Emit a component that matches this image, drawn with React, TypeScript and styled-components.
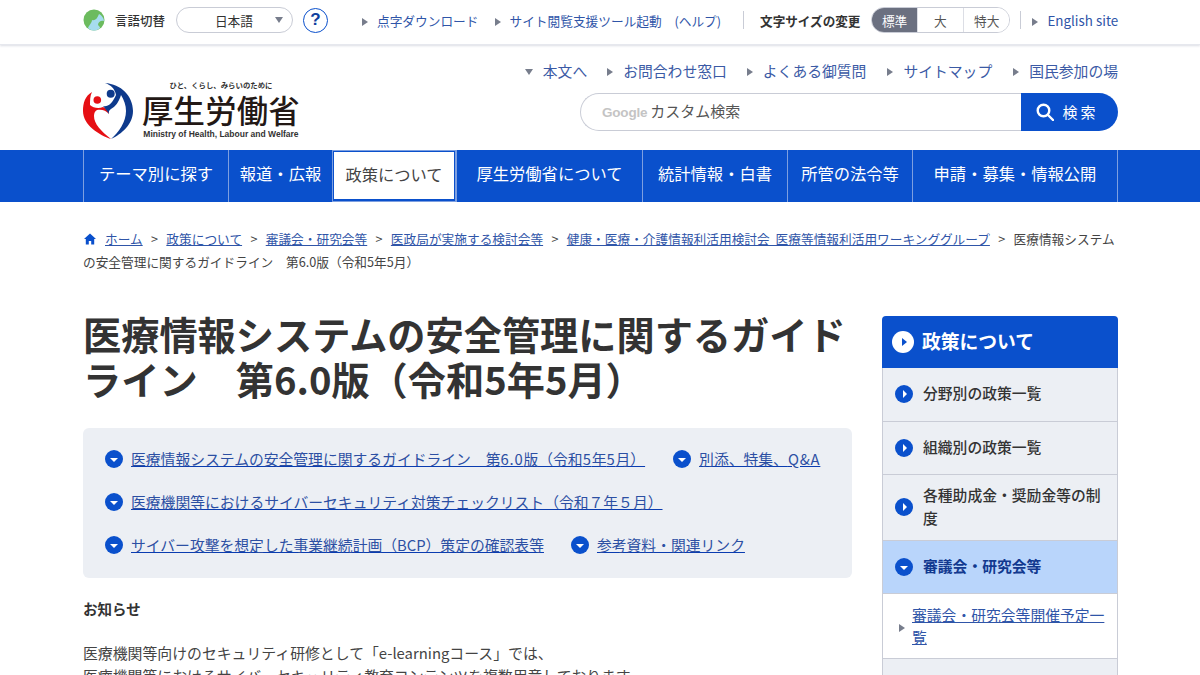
import React from "react";
import styled, { createGlobalStyle } from "styled-components";

const Global = createGlobalStyle`
  html, body { margin: 0; padding: 0; height: 675px; overflow: hidden; background: #fff; }
  body { font-family: "Noto Sans CJK JP", "Noto Sans", sans-serif; color: #333; }
  a { color: inherit; }
  * { box-sizing: border-box; }
`;

const Container = styled.div`
  width: 1035px;
  margin-left: 83px;
`;

const TopBar = styled.div`
  height: 45px;
  border-bottom: 1px solid #e6e8ee;
  box-shadow: 0 1px 2px rgba(60, 70, 110, 0.18);
`;

const TopRow = styled(Container)`
  display: flex;
  align-items: center;
  height: 40px;
  font-size: 12.7px;
  & > * {
    flex: none;
  }
`;

const LangLabel = styled.span`
  font-size: 12.5px;
  font-weight: 500;
  color: #333;
  margin-left: 10px;
  width: 61px;
  white-space: nowrap;
`;

const LangSelect = styled.div`
  width: 117px;
  height: 26px;
  border: 1px solid #c9ccd6;
  border-radius: 13px;
  display: flex;
  align-items: center;
  justify-content: flex-end;
  padding-right: 9px;
  gap: 22px;
  font-size: 12.7px;
`;

const Tri = styled.span<{ $dir?: "r" | "d"; $color?: string; $mt?: number }>`
  display: inline-block;
  width: 0;
  height: 0;
  flex: none;
  margin-top: ${(p) => p.$mt ?? 4}px;
  ${(p) =>
    p.$dir === "d"
      ? `border-left: 4.5px solid transparent; border-right: 4.5px solid transparent; border-top: 6px solid ${p.$color || "#777d8c"};`
      : `border-top: 4.5px solid transparent; border-bottom: 4.5px solid transparent; border-left: 6px solid ${p.$color || "#777d8c"};`}
`;

const Help = styled.div`
  width: 25px;
  height: 25px;
  margin-left: 10px;
  border: 1.5px solid #0a50cc;
  border-radius: 50%;
  color: #0f3f9e;
  display: flex;
  align-items: center;
  justify-content: center;
  font: 700 17px "Liberation Sans", sans-serif;
`;

const UtilLink = styled.a<{ $ml: number; $fs?: number }>`
  display: inline-flex;
  align-items: center;
  gap: 9px;
  margin-left: ${(p) => p.$ml}px;
  font-size: ${(p) => p.$fs ?? 12.7}px;
  color: #2f55a8;
  white-space: nowrap;
`;

const VLine = styled.span<{ $ml: number }>`
  width: 1px;
  height: 18px;
  background: #c9ccd6;
  margin-left: ${(p) => p.$ml}px;
`;

const SizeLabel = styled.span`
  margin-left: 16px;
  font-size: 12.6px;
  font-weight: 700;
  color: #333;
  white-space: nowrap;
`;

const SizeGroup = styled.div`
  display: flex;
  width: 139px;
  height: 26px;
  margin-left: 11px;
  border: 1px solid #c9ccd6;
  border-radius: 13px;
  overflow: hidden;
`;

const SizeBtn = styled.div<{ $on?: boolean; $w: number }>`
  width: ${(p) => p.$w}px;
  display: flex;
  align-items: center;
  justify-content: center;
  font-size: 12.7px;
  color: ${(p) => (p.$on ? "#fff" : "#555")};
  background: ${(p) => (p.$on ? "#6b7080" : "#fff")};
  border-left: ${(p) => (p.$on ? "none" : "1px solid #dcdee5")};
`;

const Header = styled(Container)`
  height: 105px;
  display: flex;
  justify-content: space-between;
`;

const Logo = styled.div`
  display: flex;
  margin-top: 38px;
  align-items: flex-start;
`;

const LogoText = styled.div`
  display: flex;
  flex-direction: column;
  align-items: center;
  margin-left: 9px;
  color: #231815;
`;

const LogoTag = styled.div`
  font-size: 7.4px;
  font-weight: 700;
  line-height: 10px;
  color: #333;
  margin-top: -3px;
`;

const LogoName = styled.div`
  font-size: 31.4px;
  font-weight: 500;
  line-height: 34px;
  letter-spacing: 0.2px;
  margin-top: 3px;
`;

const LogoEn = styled.div`
  font: 700 8.5px/11px "Liberation Sans", sans-serif;
  color: #333;
  margin-top: 2px;
`;

const HeadRight = styled.div`
  display: flex;
  flex-direction: column;
  align-items: flex-end;
`;

const HeadLinks = styled.div`
  display: flex;
  align-items: center;
  height: 22px;
  margin-top: 14px;
`;

const HeadLink = styled.a<{ $ml?: number }>`
  display: inline-flex;
  align-items: center;
  gap: 10px;
  margin-left: ${(p) => p.$ml ?? 0}px;
  font-size: 14.8px;
  color: #3b5aa5;
  white-space: nowrap;
`;

const Search = styled.div`
  display: flex;
  width: 538px;
  height: 38px;
  margin-top: 12px;
`;

const SearchField = styled.div`
  flex: 1;
  border: 1px solid #c9ccd6;
  border-right: none;
  border-radius: 19px 0 0 19px;
  display: flex;
  align-items: center;
  padding: 0 0 4px 21px;
  font-size: 15px;
  color: #555;
`;

const GoogleMark = styled.span`
  font: 700 13.5px "Liberation Sans", sans-serif;
  color: #c4c4c4;
  margin: 4px 3px 0 0;
  letter-spacing: -0.2px;
`;

const SearchBtn = styled.div`
  width: 97px;
  background: #0a50cc;
  border-radius: 0 19px 19px 0;
  color: #fff;
  display: flex;
  align-items: center;
  justify-content: center;
  gap: 8px;
  font-size: 15px;
  letter-spacing: 3px;
  padding: 0 4px 2px 0;
`;

const NavBar = styled.nav`
  background: #0a50cc;
  height: 52px;
`;

const NavRow = styled(Container)`
  display: flex;
  height: 52px;
  border-right: 1px solid #7d9fe0;
`;

const NavItem = styled.a<{ $w: number; $on?: boolean }>`
  width: ${(p) => p.$w}px;
  border-left: 1px solid #7d9fe0;
  display: flex;
  align-items: center;
  justify-content: center;
  padding-bottom: 6px;
  font-size: 16.3px;
  white-space: nowrap;
  color: ${(p) => (p.$on ? "#444" : "#fff")};
  background: ${(p) => (p.$on ? "#fff" : "transparent")};
  ${(p) => (p.$on ? "border: 2px solid #0a50cc; border-left-color: #0a50cc; border-bottom-width: 3px; padding-bottom: 4px; outline: 1px solid #7d9fe0; outline-offset: -1px;" : "")}
`;

const Crumbs = styled.div`
  margin-top: 26px;
  font-size: 12.7px;
  line-height: 22.5px;
  word-spacing: 3px;
  color: #444;
`;

const Crumb = styled.a`
  color: #2f55a8;
  text-decoration: underline;
`;

const Sep = styled.span`
  margin: 0 8.3px;
  color: #444;
`;

const Columns = styled(Container)`
  display: flex;
  justify-content: space-between;
  margin-top: 43px;
`;

const Main = styled.main`
  width: 769px;
`;

const Title = styled.h1`
  margin: -5px 0 0;
  font-size: 38.2px;
  line-height: 45px;
  font-weight: 700;
  color: #333;
`;

const Toc = styled.div`
  margin-top: 27px;
  height: 150px;
  border-radius: 6px;
  background: #eceff4;
  padding: 9px 22px;
`;

const TocRow = styled.div<{ $gap?: number }>`
  display: flex;
  align-items: center;
  height: 43px;
  gap: ${(p) => p.$gap ?? 27}px;
`;

const TocItem = styled.a`
  display: flex;
  align-items: center;
  gap: 8px;
  font-size: 14.8px;
  white-space: nowrap;
  color: #2c4fa3;
  span {
    text-decoration: underline;
    text-decoration-color: #0a3cb0;
  }
`;

const Wide = styled.b`
  font-weight: 400;
  letter-spacing: 0.8px;
`;

const Dot = styled.span<{ $size: number; $down?: boolean; $bg?: string; $fg?: string; $mt?: number }>`
  width: ${(p) => p.$size}px;
  height: ${(p) => p.$size}px;
  border-radius: 50%;
  flex: none;
  margin-top: ${(p) => p.$mt ?? 0}px;
  display: flex;
  align-items: center;
  justify-content: center;
  background: ${(p) => p.$bg || "#0a50cc"};
  &::after {
    content: "";
    display: block;
    ${(p) => {
      const s = p.$size / 4.5;
      const c = p.$fg || "#fff";
      return p.$down
        ? `border-left: ${s}px solid transparent; border-right: ${s}px solid transparent; border-top: ${s * 1.2}px solid ${c}; margin-top: 2px;`
        : `border-top: ${s}px solid transparent; border-bottom: ${s}px solid transparent; border-left: ${s * 1.2}px solid ${c}; margin-left: 2px;`;
    }}
  }
`;

const Notice = styled.h2`
  margin: 20px 0 0;
  font-size: 14.5px;
  line-height: 22px;
  font-weight: 700;
  color: #333;
`;

const Body = styled.p`
  margin: 22px 0 0;
  font-size: 14.87px;
  line-height: 22.5px;
  color: #444;
  white-space: nowrap;
`;

const Side = styled.aside`
  width: 236px;
  border-left: 1px solid #c9ccd6;
  border-right: 1px solid #c9ccd6;
  border-radius: 6px 6px 0 0;
`;

const SideHead = styled.div`
  height: 52px;
  margin: 0 -1px;
  background: #0a50cc;
  border-radius: 4px 4px 0 0;
  color: #fff;
  display: flex;
  align-items: center;
  gap: 8px;
  padding: 0 0 4px 10px;
  font-size: 18.8px;
  font-weight: 700;
`;

const SideItem = styled.div<{ $h: number; $on?: boolean }>`
  height: ${(p) => p.$h}px;
  background: ${(p) => (p.$on ? "#b9d5fb" : "#eceff4")};
  border-bottom: 1px solid #c9ccd6;
  display: flex;
  align-items: center;
  gap: 10px;
  padding: 0 12px 4px;
  font-size: 14.8px;
  line-height: 23px;
  font-weight: ${(p) => (p.$on ? 700 : 500)};
  color: ${(p) => (p.$on ? "#12398f" : "#333")};
`;

const SideSub = styled.div`
  height: 65px;
  background: #fff;
  border-bottom: 1px solid #c9ccd6;
  display: flex;
  align-items: center;
  gap: 7px;
  padding: 0 10px 0 16px;
  font-size: 14.8px;
  line-height: 22px;
  a {
    color: #2f55a8;
    text-decoration: underline;
  }
`;

const SideTail = styled.div`
  height: 40px;
  background: #eceff4;
`;

const Emblem = () => (
  <svg width="50" height="56" viewBox="4 5 50 56" style={{ flex: "none" }}>
    <circle cx="18.3" cy="22" r="3.8" fill="#e60f14" />
    <circle cx="31.7" cy="15.7" r="4" fill="#0e3a8c" />
    <path d="M13 14C6 18 4 25 4 33C4 47 20 57 32 61C22 53 15 46 15 38C15 35 16 33 18 32C22 31 27 32 30 36C29 32 27 30 24 29C20 31 14 30 11 27C11 22 11 18 13 14Z" fill="#e60f14" />
    <path d="M26 5C42 6 54 18 54 33C54 46 43 56 32 61C40 54 47 44 47 33C47 27 45 22 42 17C40 24 36 29 32 31C30 32 29.5 34 30 36C28 33 26 30 24 28C29 29 33 26 37 17C36 11 32 7 26 5Z" fill="#0e3a8c" />
  </svg>
);

const Globe = () => (
  <svg width="22" height="22" viewBox="0 0 22 22" style={{ flex: "none" }}>
    <circle cx="11" cy="11" r="10.5" fill="#6cbb5e" />
    <path d="M5 19c1-3 4-5 4-8 3 1 5-1 7-6 2 1 5 4 5 7-3-1-6 1-6 4 1 1 2 2 2 3-2 2-4 2.500-6 2.500s-4-.5-6-2.500Z" fill="#a6dcef" />
  </svg>
);

const Magnifier = () => (
  <svg width="18" height="18" viewBox="0 0 18 18" fill="none" stroke="#fff" strokeWidth="2.4" style={{ flex: "none", marginTop: 2 }}>
    <circle cx="7.500" cy="7.500" r="5.800" />
    <path d="M12 12l5 5" strokeLinecap="round" />
  </svg>
);

const HomeIcon = () => (
  <svg width="12" height="12" viewBox="0 0 12 12" fill="#0a50cc" style={{ margin: "0 9px 0 1px", verticalAlign: "-1px" }}>
    <path d="M6 0.500 0 6h1.800v5.500h3V8h2.400v3.500h3V6H12Z" />
  </svg>
);

export default function App() {
  return (
    <>
      <Global />
      <TopBar>
        <TopRow>
          <Globe />
          <LangLabel>言語切替</LangLabel>
          <LangSelect>日本語<Tri $dir="d" $mt={0} /></LangSelect>
          <Help>?</Help>
          <UtilLink $ml={34}><Tri />点字ダウンロード</UtilLink>
          <UtilLink $ml={16}><Tri />サイト閲覧支援ツール起動　(ヘルプ)</UtilLink>
          <VLine $ml={22} />
          <SizeLabel>文字サイズの変更</SizeLabel>
          <SizeGroup>
            <SizeBtn $on $w={45}>標準</SizeBtn>
            <SizeBtn $w={47}>大</SizeBtn>
            <SizeBtn $w={47}>特大</SizeBtn>
          </SizeGroup>
          <VLine $ml={10} />
          <UtilLink $ml={11} $fs={13.4}><Tri />English site</UtilLink>
        </TopRow>
      </TopBar>
      <Header>
        <Logo>
          <Emblem />
          <LogoText>
            <LogoTag>ひと、くらし、みらいのために</LogoTag>
            <LogoName>厚生労働省</LogoName>
            <LogoEn>Ministry of Health, Labour and Welfare</LogoEn>
          </LogoText>
        </Logo>
        <HeadRight>
          <HeadLinks>
            <HeadLink><Tri $dir="d" />本文へ</HeadLink>
            <HeadLink $ml={20}><Tri />お問合わせ窓口</HeadLink>
            <HeadLink $ml={20}><Tri />よくある御質問</HeadLink>
            <HeadLink $ml={21}><Tri />サイトマップ</HeadLink>
            <HeadLink $ml={21}><Tri />国民参加の場</HeadLink>
          </HeadLinks>
          <Search>
            <SearchField><GoogleMark>Google</GoogleMark>カスタム検索</SearchField>
            <SearchBtn><Magnifier />検索</SearchBtn>
          </Search>
        </HeadRight>
      </Header>
      <NavBar>
        <NavRow>
          <NavItem $w={145}>テーマ別に探す</NavItem>
          <NavItem $w={104}>報道・広報</NavItem>
          <NavItem $w={124} $on>政策について</NavItem>
          <NavItem $w={186}>厚生労働省について</NavItem>
          <NavItem $w={145}>統計情報・白書</NavItem>
          <NavItem $w={125}>所管の法令等</NavItem>
          <NavItem $w={205}>申請・募集・情報公開</NavItem>
        </NavRow>
      </NavBar>
      <Container>
        <Crumbs>
          <HomeIcon /><Crumb>ホーム</Crumb><Sep>&gt;</Sep>
          <Crumb>政策について</Crumb><Sep>&gt;</Sep>
          <Crumb>審議会・研究会等</Crumb><Sep>&gt;</Sep>
          <Crumb>医政局が実施する検討会等</Crumb><Sep>&gt;</Sep>
          <Crumb>健康・医療・介護情報利活用検討会 医療等情報利活用ワーキンググループ</Crumb><Sep>&gt;</Sep>
          医療情報システムの安全管理に関するガイドライン　第6.0版（令和5年5月）
        </Crumbs>
      </Container>
      <Columns>
        <Main>
          <Title>医療情報システムの安全管理に関するガイドライン　第6.0版（令和5年5月）</Title>
          <Toc>
            <TocRow $gap={28}>
              <TocItem><Dot $size={18} $down /><span>医療情報システムの安全管理に関するガイドライン　第<Wide>6.0</Wide>版（令和<Wide>5</Wide>年<Wide>5</Wide>月）</span></TocItem>
              <TocItem><Dot $size={18} $down /><span>別添、特集、<Wide>Q&amp;A</Wide></span></TocItem>
            </TocRow>
            <TocRow>
              <TocItem><Dot $size={18} $down /><span>医療機関等におけるサイバーセキュリティ対策チェックリスト（令和７年５月）</span></TocItem>
            </TocRow>
            <TocRow>
              <TocItem><Dot $size={18} $down /><span>サイバー攻撃を想定した事業継続計画（BCP）策定の確認表等</span></TocItem>
              <TocItem><Dot $size={18} $down /><span>参考資料・関連リンク</span></TocItem>
            </TocRow>
          </Toc>
          <Notice>お知らせ</Notice>
          <Body>
            医療機関等向けのセキュリティ研修として「e-learningコース」では、<br />
            医療機関等におけるサイバーセキュリティ教育コンテンツを複数用意しております。
          </Body>
        </Main>
        <Side>
          <SideHead><Dot $size={22} $bg="#fff" $fg="#0a50cc" $mt={3} />政策について</SideHead>
          <SideItem $h={54}><Dot $size={18} $mt={3} />分野別の政策一覧</SideItem>
          <SideItem $h={53}><Dot $size={18} $mt={3} />組織別の政策一覧</SideItem>
          <SideItem $h={66}><Dot $size={18} $mt={3} /><span>各種助成金・奨励金等の制度</span></SideItem>
          <SideItem $h={53} $on><Dot $size={18} $down $mt={3} />審議会・研究会等</SideItem>
          <SideSub><Tri /><a>審議会・研究会等開催予定一覧</a></SideSub>
          <SideTail />
        </Side>
      </Columns>
    </>
  );
}
